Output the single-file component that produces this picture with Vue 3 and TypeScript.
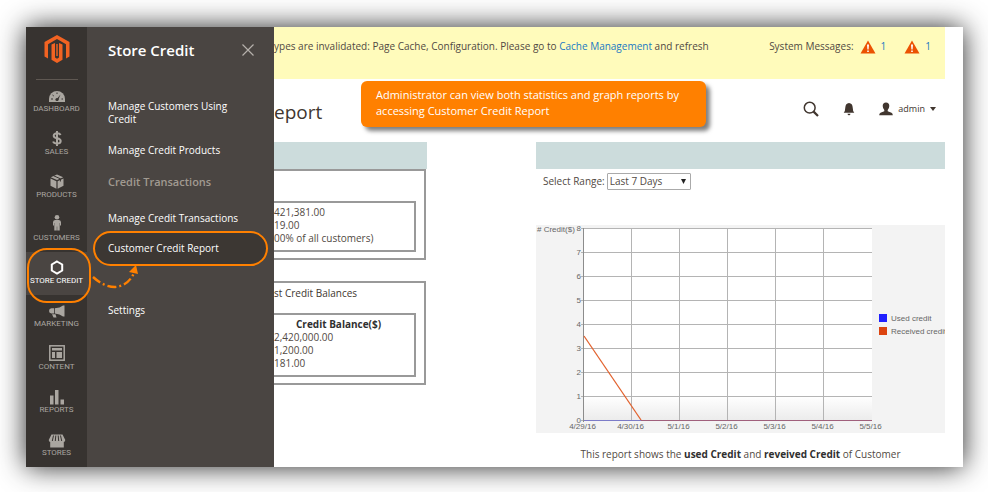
<script setup lang="ts">
import { ref } from 'vue'

interface NavItem {
  id: string
  label: string
}

const navItems: NavItem[] = [
  { id: 'dashboard', label: 'Dashboard' },
  { id: 'sales', label: 'Sales' },
  { id: 'products', label: 'Products' },
  { id: 'customers', label: 'Customers' },
  { id: 'credit', label: 'Store Credit' },
  { id: 'marketing', label: 'Marketing' },
  { id: 'content', label: 'Content' },
  { id: 'reports', label: 'Reports' },
  { id: 'stores', label: 'Stores' },
]

const activeId = 'credit'
const range = ref('7d')

const statistics: string[] = ['421,381.00', '19.00', '00% of all customers)']
const balances: string[] = ['2,420,000.00', '1,200.00', '181.00']

const dates: string[] = ['4/29/16', '4/30/16', '5/1/16', '5/2/16', '5/3/16', '5/4/16', '5/5/16']
const ticks: number[] = [0, 1, 2, 3, 4, 5, 6, 7, 8]

const xFor = (index: number): number => 47.5 + index * 48
const yFor = (value: number): number => 195.5 - value * 24
</script>

<template>
  <div class="page">
    <div class="frame">
      <nav class="sidebar" aria-label="Main">
        <a class="logo" href="#" aria-label="Home">
          <svg width="26" height="28" viewBox="0 0 26 28" fill="#f26322">
            <path d="M13 0 25.500 7V21.500L22 23.500V9.200L13 4 4 9.200V23.500L.5 21.500V7Z" />
            <path d="M7.500 9.500 11 8V22.500L13 23.700 15 22.500V8L18.500 9.500V24.700L13 28 7.500 24.700Z" />
            <path d="M12.300 9H13.700V21H12.300Z" />
          </svg>
        </a>
        <ul class="nav-list">
          <li v-for="item in navItems" :key="item.id">
            <a href="#" class="nav-item" :class="{ active: item.id === activeId }">
              <svg class="nav-icon" width="18" height="18" viewBox="0 0 18 18">
                <g v-if="item.id === 'dashboard'">
                  <path d="M1 16V13A8 8 0 0 1 17 13V16Z" fill="currentColor" />
                  <path d="M8 14 12.500 8.500 10 14.500Z" class="cut" />
                  <circle cx="9" cy="13.500" r="1.600" class="cut" />
                  <path d="M3 13H5M4.500 9 5.800 10M9 6.500V8M13.500 13H15" class="cut-line" />
                </g>
                <g v-else-if="item.id === 'sales'" fill="none" stroke="currentColor" stroke-width="2">
                  <path d="M12.600 6C12 4.800 10.800 4.300 9 4.300 6.900 4.300 5.700 5.200 5.700 6.700 5.700 10.300 12.700 8.300 12.700 12 12.700 13.700 11.200 14.600 9 14.600 7.100 14.600 5.700 14 5.100 12.500M9 2V17" />
                </g>
                <g v-else-if="item.id === 'products'" fill="currentColor">
                  <path d="M9 2.500 15.200 5.200 9 8 2.800 5.200Z" />
                  <path d="M2.500 6.500 8.400 9.200V16.800L2.500 13.700Z" />
                  <path d="M15.500 6.500 9.600 9.200V16.800L15.500 13.700Z" />
                  <path d="M5.500 3.700 12.400 6.800V9.500" class="cut-line" />
                </g>
                <g v-else-if="item.id === 'customers'" fill="currentColor">
                  <circle cx="9" cy="2.300" r="2.300" />
                  <path d="M7 5H11Q13 5.200 13 7.200V10.500H12V8H11.700V15.500H9.200V11.500H8.800V15.500H6.300V8H6V10.500H5V7.200Q5 5.200 7 5Z" />
                </g>
                <path
                  v-else-if="item.id === 'credit'"
                  d="M9 3.500 14.200 6.500V12.500L9 15.500 3.800 12.500V6.500Z"
                  fill="none"
                  stroke="currentColor"
                  stroke-width="2"
                />
                <g v-else-if="item.id === 'marketing'" fill="currentColor">
                  <path d="M6.800 7.200Q12 7 15 4.500H16.500V15.500H15Q12 13 6.800 12.500Z" />
                  <path d="M6 7.200H3.500Q1 7.500 1 10 1 12.200 3.500 12.500H6ZM4 13.300H7.500L8.500 16.500H5.500Z" />
                </g>
                <g v-else-if="item.id === 'content'">
                  <rect x="1.800" y="1.800" width="14.400" height="14.400" fill="none" stroke="currentColor" stroke-width="1.500" />
                  <path d="M4 4H14V6.500H4ZM4 8H7V14H4ZM8.500 8H14V14H8.500Z" fill="currentColor" />
                </g>
                <path v-else-if="item.id === 'reports'" d="M2 8.500H5.500V17.500H2ZM7 3H10.500V17.500H7ZM12.500 12.500H16V17.500H12.500Z" fill="currentColor" />
                <g v-else>
                  <path d="M3.500 4.500H14.500L17.300 10Q17 12 15.800 12V17.500H2.200V12Q1 12 .7 10Z" fill="currentColor" />
                  <path d="M5.500 5.500 4.300 11M7.800 5.500 7.300 11M10.200 5.500 10.700 11M12.500 5.500 13.700 11" class="cut-line" />
                </g>
              </svg>
              <span>{{ item.label }}</span>
            </a>
          </li>
        </ul>
      </nav>

      <section class="flyout" aria-label="Store Credit">
        <header class="flyout-head">
          <h2>Store Credit</h2>
          <button type="button" class="close" aria-label="Close menu">
            <svg width="12" height="12" viewBox="0 0 12 12" stroke="currentColor" stroke-width="1.200">
              <path d="M.5 .5 11.500 11.500M11.500 .5 .5 11.500" />
            </svg>
          </button>
        </header>
        <a href="#" class="menu-link">Manage Customers Using Credit</a>
        <a href="#" class="menu-link">Manage Credit Products</a>
        <h3>Credit Transactions</h3>
        <a href="#" class="menu-link">Manage Credit Transactions</a>
        <a href="#" class="menu-link current">Customer Credit Report</a>
        <a href="#" class="menu-link settings">Settings</a>
      </section>

      <main class="content">
        <div class="messages">
          <p>ypes are invalidated: Page Cache, Configuration. Please go to <a href="#">Cache Management</a> and refresh</p>
          <div class="system">
            <span>System Messages:</span>
            <a v-for="n in 2" :key="n" href="#" class="alert">
              <svg width="16" height="14" viewBox="0 0 16 14">
                <path d="M8 .5 15.500 13.500H.5Z" fill="#eb5202" />
                <path d="M7 4.500H9L8.600 9.500H7.400ZM7.200 10.500H8.800V12H7.200Z" fill="#fff" />
              </svg>
              1
            </a>
          </div>
        </div>

        <header class="page-head">
          <h1>eport</h1>
          <div class="tools">
            <button type="button" aria-label="Search">
              <svg width="16" height="16" viewBox="0 0 16 16" fill="none" stroke="currentColor">
                <circle cx="6.700" cy="6.700" r="5.400" stroke-width="1.500" />
                <path d="M10.600 10.600 15 15" stroke-width="2.200" />
              </svg>
            </button>
            <button type="button" aria-label="Notifications">
              <svg width="12" height="14" viewBox="0 0 12 14" fill="currentColor">
                <path d="M6 1Q9.500 1.300 9.700 5.500 9.700 9 11.300 10.800H.7Q2.300 9 2.300 5.500 2.500 1.300 6 1ZM4.500 11.700H7.500Q7.300 13.200 6 13.200 4.700 13.200 4.500 11.700Z" />
              </svg>
            </button>
            <button type="button" class="account">
              <svg width="14" height="14" viewBox="0 0 14 14" fill="currentColor">
                <path d="M7 .5Q10.300 .6 10.300 4 10.200 6.600 8.700 8V9.200L12.500 10.700Q13.800 11.300 13.800 13.200H.2Q.2 11.300 1.500 10.700L5.300 9.200V8Q3.800 6.600 3.700 4 3.700 .6 7 .5Z" />
              </svg>
              <span>admin</span>
              <svg width="6" height="4" viewBox="0 0 6 4" fill="currentColor"><path d="M0 0H6L3 4Z" /></svg>
            </button>
          </div>
        </header>

        <div class="columns">
          <div class="column">
            <div class="bar"></div>
            <div class="panel first">
              <table class="inner">
                <tbody>
                  <tr v-for="value in statistics" :key="value"><td>{{ value }}</td></tr>
                </tbody>
              </table>
            </div>
            <div class="panel second">
              <h4>st Credit Balances</h4>
              <table class="inner">
                <thead>
                  <tr><th scope="col">Credit Balance($)</th></tr>
                </thead>
                <tbody>
                  <tr v-for="value in balances" :key="value"><td>{{ value }}</td></tr>
                </tbody>
              </table>
            </div>
          </div>

          <div class="column">
            <div class="bar"></div>
            <div class="range">
              <label for="range">Select Range:</label>
              <div class="select-box">
                <select id="range" v-model="range">
                  <option value="7d">Last 7 Days</option>
                </select>
                <svg width="5" height="5" viewBox="0 0 5 5"><path d="M0 0H5L2.500 5Z" fill="#222" /></svg>
              </div>
            </div>
            <svg class="chart" viewBox="0 0 409 208" role="img" aria-label="Credit by day">
              <defs>
                <linearGradient id="floor" x1="0" y1="0" x2="0" y2="1">
                  <stop offset="0" stop-color="#fff" />
                  <stop offset="1" stop-color="#ececec" />
                </linearGradient>
              </defs>
              <rect width="409" height="208" fill="#f3f3f3" />
              <rect x="48" y="3" width="288" height="192" fill="#fff" />
              <rect x="48" y="171" width="288" height="24" fill="url(#floor)" />
              <g stroke="#b4b4b4">
                <line v-for="t in ticks" :key="t" x1="45" x2="336" :y1="yFor(t)" :y2="yFor(t)" />
                <line v-for="(d, i) in dates.slice(0, 6)" :key="d" :x1="xFor(i)" :x2="xFor(i)" y1="3" y2="195" />
              </g>
              <path d="M47.500 3V197" stroke="#8c8c8c" />
              <path d="M48 195.500H105" stroke="#7c7cc8" />
              <path d="M105 195.500H336" stroke="#a0607c" />
              <path d="M48 111 105 195" stroke="#e2622e" stroke-width="1.300" />
              <g class="chart-text">
                <text x="1" y="7">#&#160;Credit($)</text>
                <text v-for="t in ticks" :key="t" x="45" :y="yFor(t) + 2" text-anchor="end">{{ t }}</text>
                <text v-for="(d, i) in dates" :key="d" :x="xFor(i) - 1" y="204" text-anchor="middle">{{ d }}</text>
                <text x="355" y="96">Used credit</text>
                <text x="355" y="109">Received credit</text>
              </g>
              <rect x="343" y="89" width="8" height="8" fill="#2020ff" />
              <rect x="343" y="102" width="8" height="8" fill="#dc4410" />
            </svg>
            <p class="caption">This report shows the <b>used Credit</b> and <b>reveived Credit</b> of Customer</p>
          </div>
        </div>
      </main>

      <div class="ring"></div>
      <svg class="arrow" width="48" height="32" viewBox="0 0 48 32">
        <path d="M1 14Q12 24 23 24 36 23 42 10" fill="none" stroke="#ff8000" stroke-width="2.400" stroke-dasharray="9 3 2 3" />
        <path d="M44 2 46 11 37 9Z" fill="#ff8000" />
      </svg>
      <div class="callout">Administrator can view both statistics and graph reports by accessing Customer Credit Report</div>
    </div>
  </div>
</template>

<style>
body {
  margin: 0;
  background: #fff;
}
</style>

<style scoped>
.page {
  padding: 27px 25px 25px 26px;
  font-family: "Open Sans", "Noto Sans", sans-serif;
  font-size: 10px;
  line-height: 13px;
  color: #514943;
}
.page * {
  box-sizing: border-box;
}
h1, h2, h3, h4, p, ul {
  margin: 0;
  padding: 0;
  font-weight: 400;
}
a {
  text-decoration: none;
}
button {
  display: flex;
  align-items: center;
  padding: 0;
  border: 0;
  background: none;
  color: #41362f;
  font: inherit;
}
.frame {
  position: relative;
  display: flex;
  background: #fff;
  box-shadow: 0 0 26px rgba(0, 0, 0, 0.85);
}
.sidebar {
  width: 61px;
  flex: none;
  background: #373330;
}
.logo {
  display: flex;
  justify-content: center;
  margin: 0 9px 0 10px;
  padding: 8px 0 16px;
  border-bottom: 1px solid #5f5852;
}
.nav-list {
  list-style: none;
}
.nav-item {
  display: flex;
  flex-direction: column;
  align-items: center;
  height: 43px;
  padding-top: 6px;
  color: #aaa6a0;
  font-family: Roboto, "Open Sans", sans-serif;
  font-size: 8px;
  line-height: 10px;
  text-transform: uppercase;
  white-space: nowrap;
  --item-bg: #373330;
}
.nav-item.active {
  background: #4a4542;
  color: #fff;
}
.nav-icon {
  flex: none;
}
.cut {
  fill: var(--item-bg);
}
.cut-line {
  fill: none;
  stroke: var(--item-bg);
  stroke-width: 1;
}
.flyout {
  width: 187px;
  flex: none;
  padding: 0 20px 0 21px;
  background: #4a4542;
}
.flyout-head {
  display: flex;
  align-items: center;
  justify-content: space-between;
  height: 46px;
  margin-bottom: 27px;
}
h2 {
  color: #fff;
  font-size: 15px;
  font-weight: 600;
}
.close {
  color: #b5b0ab;
}
.menu-link {
  display: block;
  margin-bottom: 18px;
  color: #fff;
  font-weight: 500;
}
h3 {
  margin-bottom: 23px;
  color: #a19a91;
  font-size: 11px;
  font-weight: 600;
  line-height: 14px;
}
h3 + .menu-link {
  margin-bottom: 6px;
}
.menu-link.current {
  margin: 0 -14px 38px -15px;
  padding: 9px 13px;
  border: 2px solid #ff8000;
  border-radius: 18px;
  background: #3c3733;
}
.menu-link.settings {
  margin-bottom: 0;
}
.content {
  flex: 1;
  min-width: 0;
  padding: 0 18px 4px 0;
}
.messages {
  display: flex;
  justify-content: space-between;
  height: 52px;
  padding: 13px 14px 0 0;
  background: #fffbbb;
  white-space: nowrap;
}
.messages a {
  color: #1979c3;
}
.system {
  display: flex;
  gap: 6px;
}
.alert {
  display: flex;
  gap: 5px;
}
.alert + .alert {
  margin-left: 12px;
}
.page-head {
  display: flex;
  align-items: center;
  justify-content: space-between;
  height: 63px;
  padding: 0 9px 4px 0;
}
h1 {
  padding-top: 6px;
  color: #41362f;
  font-size: 19px;
  line-height: 24px;
}
.tools {
  display: flex;
  align-items: center;
  gap: 24px;
}
.account {
  gap: 5px;
  font-size: 9px;
}
.columns {
  display: grid;
  grid-template-columns: 153fr 409fr;
  gap: 109px;
}
.bar {
  height: 27px;
  background: #ccdcdc;
}
.panel {
  margin-right: 1px;
  padding: 0 8px 6px 0;
  border: 2px solid #999;
  border-left: 0;
}
.panel.first {
  margin-bottom: 21px;
  padding-top: 30px;
}
.panel h4 {
  padding: 4px 0 13px;
  color: #41362f;
}
.inner {
  width: 100%;
  border-collapse: separate;
  border-spacing: 0;
  border: 2px solid #999;
  border-left: 0;
  padding: 3px 0 5px;
  text-align: left;
  white-space: nowrap;
}
.inner td,
.inner th {
  padding: 0;
}
.inner th {
  padding-left: 22px;
  color: #303030;
  font-weight: 700;
}
.range {
  display: flex;
  align-items: center;
  gap: 2px;
  padding: 4px 0 35px 7px;
}
.select-box {
  display: flex;
  align-items: center;
}
.select-box svg {
  margin-left: -10px;
  pointer-events: none;
}
select {
  width: 84px;
  height: 17px;
  padding: 0 2px;
  border: 1px solid #aaa;
  border-radius: 1px;
  background: #fff;
  appearance: none;
  color: #514943;
  font: inherit;
}
.chart {
  display: block;
  width: 100%;
}
.chart-text {
  fill: #666;
  font-family: "Liberation Sans", Arial, sans-serif;
  font-size: 8px;
}
.caption {
  padding-top: 15px;
  text-align: center;
}
.caption b {
  color: #303030;
}
.ring {
  position: absolute;
  left: 1px;
  top: 221px;
  width: 64px;
  height: 55px;
  border: 2px solid #ff8000;
  border-radius: 20px;
  pointer-events: none;
}
.arrow {
  position: absolute;
  left: 66px;
  top: 236px;
}
.callout {
  position: absolute;
  left: 335px;
  top: 54px;
  width: 345px;
  padding: 6px 14px 8px 15px;
  border-radius: 6px;
  background: #ff8000;
  box-shadow: 4px 4px 4px rgba(0, 0, 0, 0.5);
  color: #fff;
  font-size: 11px;
  line-height: 16px;
}
</style>
